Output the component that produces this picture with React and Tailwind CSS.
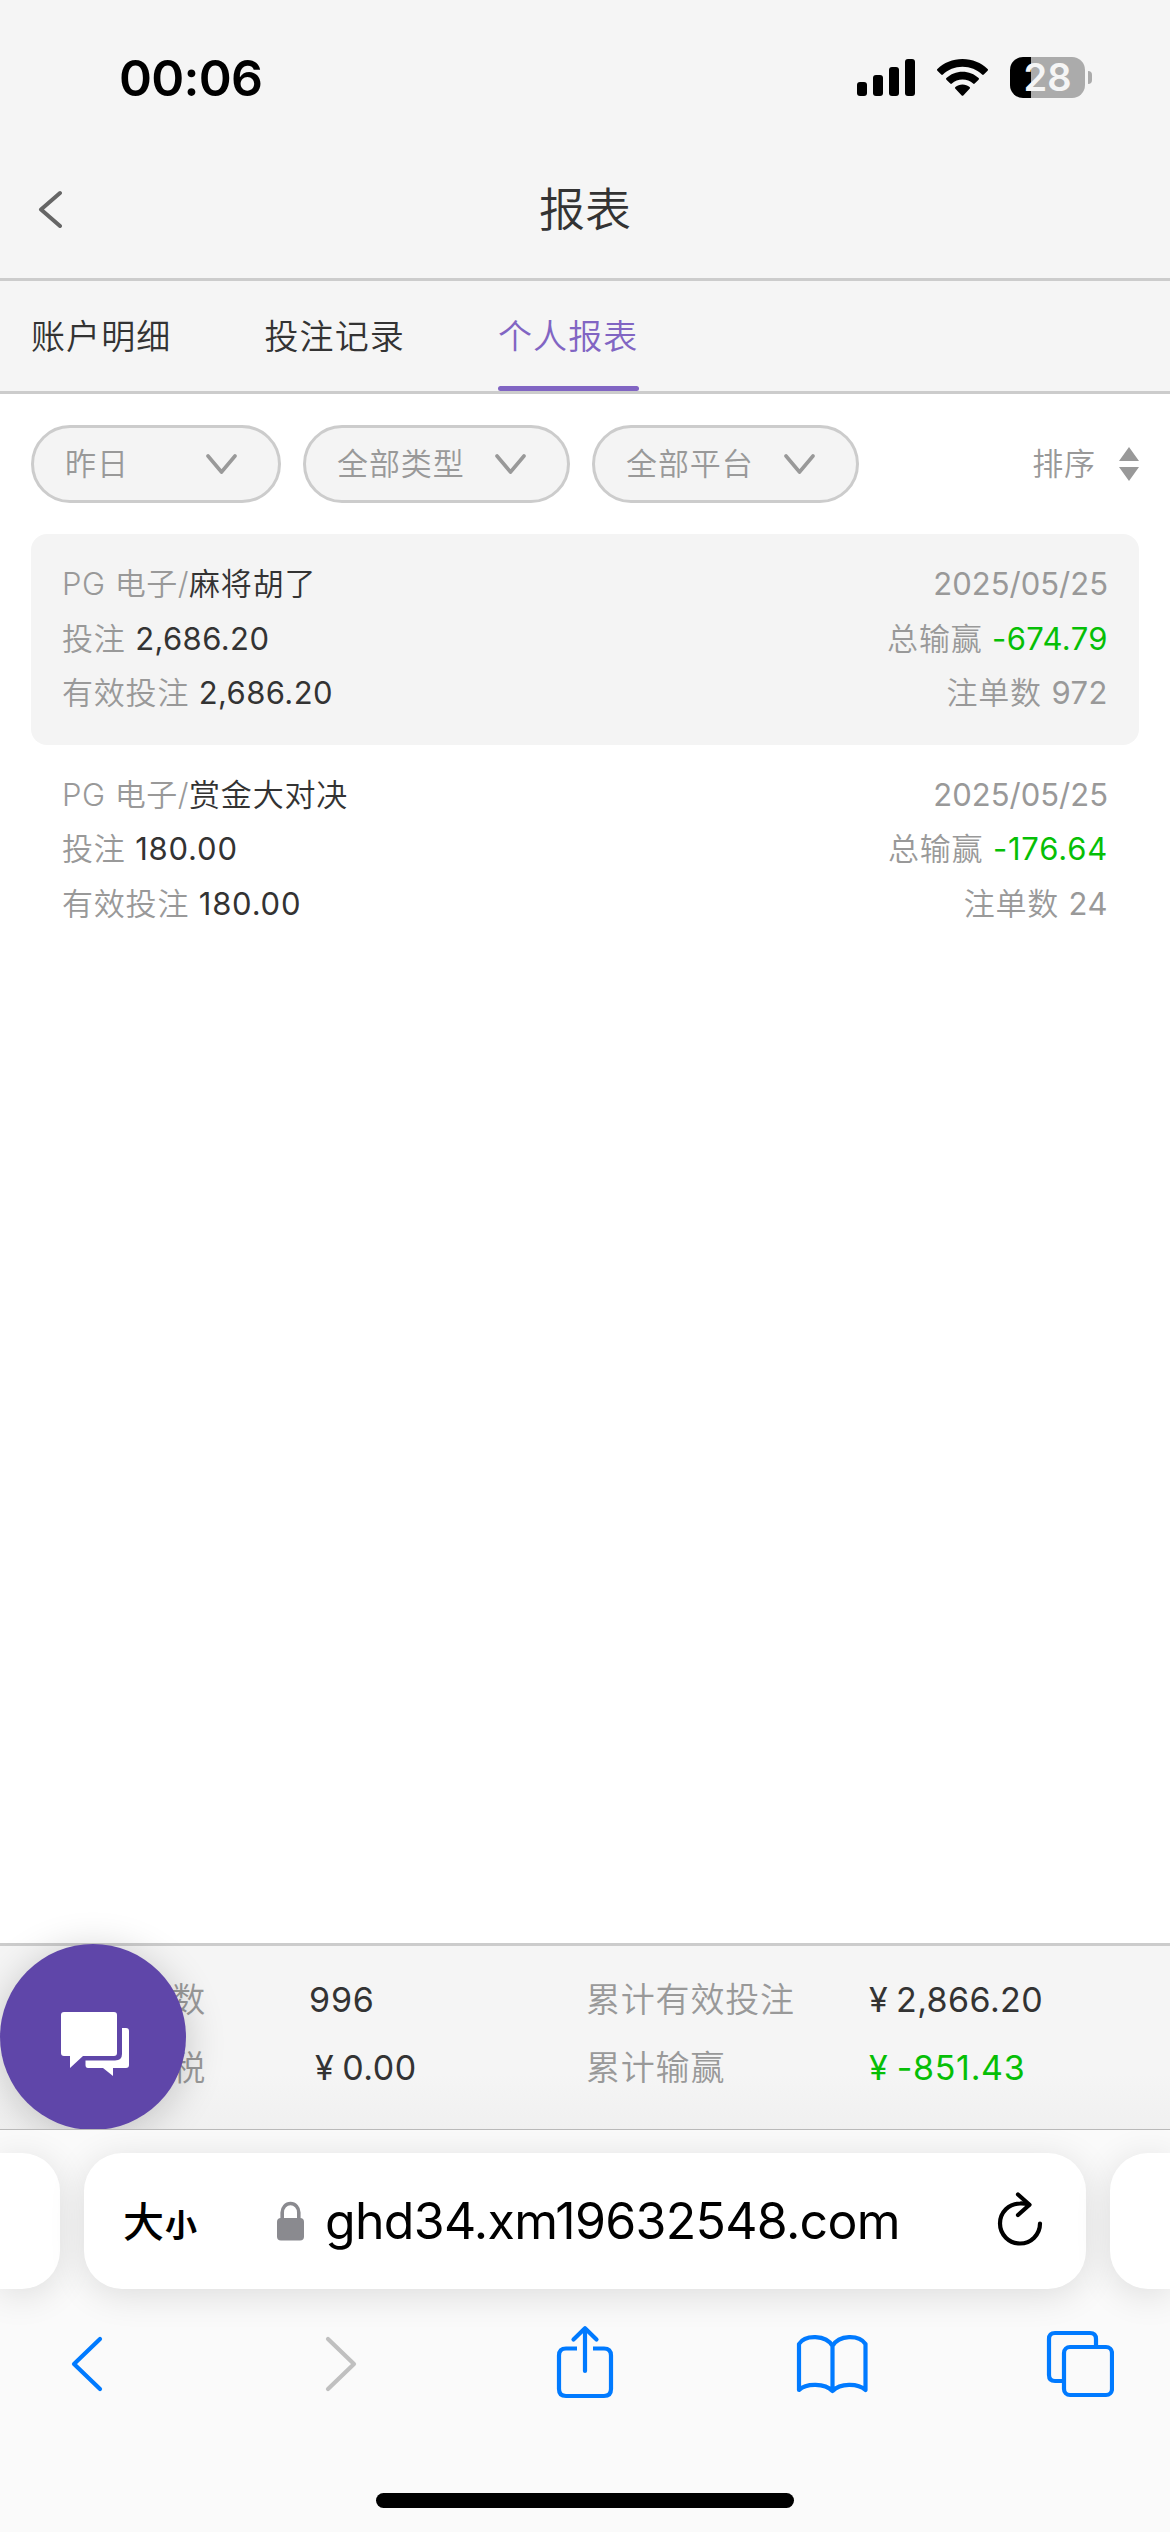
const records = [
  { game: "麻将胡了", date: "2025/05/25", bet: "2,686.20", valid: "2,686.20", result: "-674.79", count: "972", active: true, tracking: "tracking-[0.400px]" },
  { game: "赏金大对决", date: "2025/05/25", bet: "180.00", valid: "180.00", result: "-176.64", count: "24", active: false, tracking: "tracking-[0.800px]" },
];

function StatusBar() {
  return (
    <div className="flex h-[144px] items-start justify-between pl-[119px] pr-[78px] text-black">
      <div className="pt-[48px] text-[50px] font-semibold leading-[60px] tracking-[-0.7px]">00:06</div>
      <div className="flex items-center pt-[57px]">
        <svg className="h-[41px] w-[58px]" viewBox="0 0 58 41">
          <rect x="0" y="25" width="10" height="14" rx="3" />
          <rect x="16" y="18" width="10" height="21" rx="3" />
          <rect x="32" y="10" width="10" height="29" rx="3" />
          <rect x="48" y="2" width="10" height="37" rx="3" />
        </svg>
        <svg className="ml-[22px] h-[41px] w-[51px]" viewBox="0 0 51 41">
          <path d="M25.5 2C15.600 2 6.800 5.800.400 12.000a1.200 1.200 0 0 0 0 1.700L4.200 17.500a1.200 1.200 0 0 0 1.700 0C11 12.600 17.900 9.700 25.500 9.700s14.500 2.900 19.600 7.800a1.200 1.200 0 0 0 1.700 0l3.800-3.800a1.200 1.200 0 0 0 0-1.700C44.200 5.800 35.400 2 25.500 2Z" />
          <path d="M25.500 14.700c-6.200 0-11.900 2.400-16.100 6.300a1.200 1.200 0 0 0 0 1.700l3.900 3.900a1.200 1.200 0 0 0 1.600 0c2.800-2.500 6.500-4 10.600-4s7.800 1.500 10.600 4a1.200 1.200 0 0 0 1.600 0l3.900-3.900a1.200 1.200 0 0 0 0-1.700c-4.200-3.900-9.900-6.300-16.100-6.300Z" />
          <path d="M25.500 27.400c-2.700 0-5.200 1-7.100 2.600a1.200 1.200 0 0 0 0 1.800l6.300 6.600a1.200 1.200 0 0 0 1.600 0l6.300-6.600a1.200 1.200 0 0 0 0-1.800c-1.900-1.600-4.400-2.600-7.100-2.600Z" />
        </svg>
        <div className="ml-[22px] flex h-[41px] w-[75px] items-center justify-center rounded-[13px] bg-[linear-gradient(to_right,#000_21px,#ababab_21px)] text-[38px] font-semibold leading-[41px] text-[#f5f5f5]">
          28
        </div>
        <div className="ml-[3px] h-[13px] w-[4px] rounded-r-[4px] bg-[#ababab]" />
      </div>
    </div>
  );
}

function Filter({ label, width }) {
  return (
    <div className={"flex h-[78px] items-center justify-between rounded-full border-[3px] border-[#ccc] bg-[#f4f4f4] pl-[31px] pr-[41px] " + width}>
      <span>{label}</span>
      <svg className="h-[20px] w-[31px]" viewBox="0 0 31 20" fill="none" stroke="#999" strokeWidth="3.6" strokeLinecap="round" strokeLinejoin="round">
        <path d="M2 2 15.500 18 29 2" />
      </svg>
    </div>
  );
}

function Record({ r }) {
  return (
    <div className={"flex h-[210.500px] justify-between rounded-[16px] px-[31px] pt-[23px] text-[31px] leading-[54.500px] tracking-[0.8px] text-[#999] " + (r.active ? "bg-[#f4f4f4]" : "")}>
      <div>
        <div><span className="tracking-[0.5px]">PG 电子/</span><span className="text-[#333]">{r.game}</span></div>
        <div>投注 <span className={"font-normal text-[#333] " + r.tracking}>{r.bet}</span></div>
        <div>有效投注 <span className={"font-normal text-[#333] " + r.tracking}>{r.valid}</span></div>
      </div>
      <div className="text-right">
        <div className="font-normal tracking-[0]">{r.date}</div>
        <div>总输赢 <span className={"font-normal text-[#06bf06] " + r.tracking}>{r.result}</span></div>
        <div>注单数 <span className="font-normal tracking-[0.500px]">{r.count}</span></div>
      </div>
    </div>
  );
}

function Summary() {
  return (
    <div className="relative h-[186px] border-t-[3px] border-[#ccc] bg-[linear-gradient(#f5f5f5_70%,#f0f0f0)] pt-[20px] text-[34px] leading-[68px] tracking-[0.800px] text-[#999]">
      <div className="grid grid-cols-[309px_277px_283px_1fr]">
        <div className="pr-[103px] text-right">数</div>
        <div className="font-normal text-[#333]">996</div>
        <div>累计有效投注</div>
        <div className="font-normal tracking-[0.400px] text-[#333] [word-spacing:-2px]">¥ 2,866.20</div>
        <div className="pr-[103px] text-right">税</div>
        <div className="pl-[6px] font-normal tracking-[0.500px] text-[#333] [word-spacing:-2px]">¥ 0.00</div>
        <div>累计输赢</div>
        <div className="font-normal tracking-[0.700px] text-[#06bf06] [word-spacing:-2px]">¥ -851.43</div>
      </div>
      <div className="absolute left-0 top-[-2px] flex h-[186px] w-[186px] items-center justify-center rounded-full bg-[#5f46a9] shadow-[0_6px_40px_rgba(0,0,0,0.2)]">
        <svg className="ml-[4px] mt-[14px] h-[66px] w-[70px]" viewBox="0 0 70 66" fill="#fff">
          <path d="M4 1H54Q57 1 57 4V42Q57 45 54 45H23L10 57V45H4Q1 45 1 42V4Q1 1 4 1Z" />
          <path d="M62 17H66Q69 17 69 20V54Q69 57 66 57H53V65L43 57H28Q25.500 57 25.500 54V49.500H55Q62 49.500 62 43Z" />
        </svg>
      </div>
    </div>
  );
}

function Browser() {
  const s = { fill: "none", stroke: "#007aff", strokeWidth: 4.2, strokeLinecap: "round", strokeLinejoin: "round" };
  return (
    <div className="relative h-[403px] overflow-hidden border-t border-[#b9b9b9] bg-[#fafafa]">
      <div className="flex h-[159px] gap-[24px] pt-[23px]">
        <div className="h-[136px] w-[60px] rounded-r-[38px] bg-white shadow-[0_6px_36px_rgba(0,0,0,0.12)]" />
        <div className="flex h-[136px] w-[1002px] items-center rounded-[38px] bg-white pl-[39px] pr-[43px] text-black shadow-[0_6px_36px_rgba(0,0,0,0.12)]">
          <div className="flex w-[154px] items-baseline gap-[1px] pt-[5px] font-bold leading-[60px]">
            <span className="text-[41px] font-medium">大</span>
            <span className="text-[32px]">小</span>
          </div>
          <svg className="h-[40px] w-[27px]" viewBox="0 0 27 40">
            <rect x="0" y="17" width="27" height="22.500" rx="4" fill="#8a8a8f" />
            <path d="M5.200 19V11.500a8.300 9 0 0 1 16.600 0V19" fill="none" stroke="#8a8a8f" strokeWidth="3.600" />
          </svg>
          <div className="ml-[21px] flex-1 whitespace-nowrap text-[50px] font-normal leading-[60px] tracking-[-0.700px]">ghd34.xm19632548.com</div>
          <svg className="mb-[4px] h-[54px] w-[46px]" viewBox="0 0 46 54" fill="none" stroke="#000" strokeWidth="4.200" strokeLinecap="round" strokeLinejoin="round">
            <path d="M43 31.500A20 20 0 1 1 23 11.500Q28 11.300 32 12.700" />
            <path d="M21 2.500 32.500 12.700 21 23" />
          </svg>
        </div>
        <div className="h-[136px] flex-1 rounded-l-[38px] bg-white shadow-[0_6px_36px_rgba(0,0,0,0.12)]" />
      </div>
      <div className="mt-[35px] flex h-[76px] items-center pl-[70px]">
        <svg className="mt-[4px] h-[56px] w-[33px]" viewBox="0 0 33 56" {...s}><path d="M30 3 4 28 30 53" /></svg>
        <svg className="ml-[222px] mt-[4px] h-[56px] w-[33px]" viewBox="0 0 33 56" {...s} stroke="#c0c0c0"><path d="M3 3 29 28 3 53" /></svg>
        <svg className="ml-[198px] h-[74px] w-[58px]" viewBox="0 0 58 74" {...s}>
          <path d="M21 23.500H10Q3 23.500 3 30.500V64Q3 71 10 71H48Q55 71 55 64V30.500Q55 23.500 48 23.500H37" strokeLinecap="butt" />
          <path d="M29 46V4M17.500 14.500 29 3.200 40.500 14.500" />
        </svg>
        <svg className="ml-[182px] mt-[3px] h-[60px] w-[72px]" viewBox="0 0 72 60" {...s}>
          <path d="M36.500 12C30 .5 9 .5 3 10V56C10 49 29 49 36.500 57C44 49 62 49 69.500 56V10C63 .5 43 .5 36.500 12V57" />
        </svg>
        <svg className="ml-[178px] mt-[4px] h-[68px] w-[68px]" viewBox="0 0 68 68" {...s}>
          <path d="M50 16V9Q50 3 44 3H9Q3 3 3 9V45Q3 51 9 51H17" strokeLinecap="butt" />
          <rect x="18" y="17" width="48" height="48" rx="6" />
        </svg>
      </div>
      <div className="mx-auto mt-[93px] h-[15px] w-[418px] rounded-full bg-black" />
    </div>
  );
}

export default function App() {
  return (
    <div className="flex h-[2532px] w-[1170px] flex-col overflow-hidden bg-white font-['Inter','Noto_Sans_CJK_SC',sans-serif] font-[350]">
      <header className="h-[281px] shrink-0 border-b-[3px] border-[#ccc] bg-[#f5f5f5]">
        <StatusBar />
        <div className="grid h-[134px] grid-cols-3 items-center px-[38px] pb-[4px]">
          <svg className="h-[38px] w-[24px]" viewBox="0 0 24 38" fill="none" stroke="#666" strokeWidth="4" strokeLinecap="round" strokeLinejoin="round"><path d="M22 3 3 19.500 22 36" /></svg>
          <h1 className="text-center text-[46px] font-[350] leading-[60px] text-[#333]">报表</h1>
        </div>
      </header>
      <nav className="flex h-[113px] shrink-0 gap-[92.500px] border-b-[3px] border-[#ccc] bg-[#f5f5f5] pl-[31px] text-[34px] leading-[112px] tracking-[1.100px] text-[#333]">
        <div className="w-[141px]">账户明细</div>
        <div className="w-[141px]">投注记录</div>
        <div className="flex h-[110px] w-[141px] flex-col justify-between whitespace-nowrap text-[#8165c3]">
          <span className="h-[105px]">个人报表</span>
          <span className="h-[5px] rounded-full bg-[#8165c3]" />
        </div>
      </nav>
      <main className="flex-1 px-[31px] pt-[31px]">
        <div className="flex items-center gap-[22px] text-[31px] tracking-[0.9px] text-[#999]">
          <Filter label="昨日" width="w-[250px]" />
          <Filter label="全部类型" width="w-[267px]" />
          <Filter label="全部平台" width="w-[267px]" />
          <div className="ml-auto flex items-center gap-[23px]">
            <span>排序</span>
            <svg className="h-[34px] w-[20px]" viewBox="0 0 20 34" fill="#999"><path d="M10 0 20 14H0ZM0 20H20L10 34Z" /></svg>
          </div>
        </div>
        <div className="mt-[31px]">
          {records.map((r) => <Record key={r.game} r={r} />)}
        </div>
      </main>
      <Summary />
      <Browser />
    </div>
  );
}
